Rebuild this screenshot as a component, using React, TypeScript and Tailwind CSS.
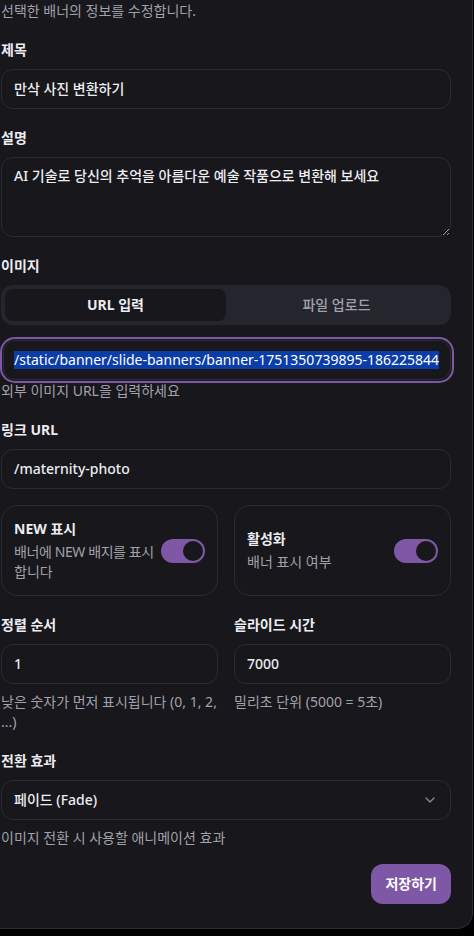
import React from "react";
import { ChevronDown } from "lucide-react";

const font = { fontFamily: '"Noto Sans", "Noto Sans CJK KR", sans-serif' };

function Label({ children, className = "" }: { children: React.ReactNode; className?: string }) {
  return <div className={`text-sm leading-5 font-bold text-[#ececf1] ${className}`}>{children}</div>;
}

function Input({ value }: { value: string }) {
  return (
    <div className="mt-[9px] h-10 w-full rounded-xl border border-[#2b2b34] bg-[#17171c] px-3 flex items-center text-sm font-medium text-[#ececf1]">
      {value}
    </div>
  );
}

function Toggle() {
  return (
    <div className="flex h-6 w-11 shrink-0 items-center justify-end rounded-full bg-[#7e58a7] p-[2px]">
      <div className="h-5 w-5 rounded-full bg-[#17171c]" />
    </div>
  );
}

export default function App() {
  return (
    <div className="h-[936px] w-[474px] overflow-hidden bg-black" style={font}>
      <div className="ml-[-23px] w-[496px] border-x border-b border-[#2b2b34] rounded-br-2xl bg-[#17171c] pl-[23px] pr-[21px] pt-px pb-6">
        <div className="text-sm leading-5 text-[#a1a1aa]">선택한 배너의 정보를 수정합니다.</div>

        <Label className="mt-[19px]">제목</Label>
        <Input value="만삭 사진 변환하기" />

        <Label className="mt-[19px]">설명</Label>
        <textarea
          readOnly
          value="AI 기술로 당신의 추억을 아름다운 예술 작품으로 변환해 보세요"
          className="mt-[9px] block h-20 w-full rounded-xl border border-[#2b2b34] bg-[#17171c] px-3 py-2 text-sm leading-5 font-medium text-[#ececf1] outline-none"
          style={font}
        />

        <Label className="mt-[19px]">이미지</Label>
        <div className="mt-[9px] grid h-10 grid-cols-2 rounded-xl bg-[#25252d] p-1">
          <div className="flex items-center justify-center rounded-lg bg-[#17171c] text-sm font-bold text-[#ececf1]">URL 입력</div>
          <div className="flex items-center justify-center text-sm font-medium text-[#a1a1aa]">파일 업로드</div>
        </div>
        <div className="mt-[15px] ml-[2px] h-10 w-[448px] rounded-xl border border-[#2b2b34] bg-[#17171c] pl-[10px] flex items-center overflow-hidden ring-2 ring-[#7e58a7] ring-offset-1 ring-offset-[#17171c]">
          <span className="whitespace-nowrap bg-[#0b3da8] text-sm leading-[18px] text-white">/static/banner/slide-banners/banner-1751350739895-186225844</span>
        </div>
        <div className="mt-px text-sm leading-5 text-[#a1a1aa]">외부 이미지 URL을 입력하세요</div>

        <Label className="mt-[19px]">링크 URL</Label>
        <Input value="/maternity-photo" />

        <div className="mt-4 grid grid-cols-2 gap-4">
          <div className="flex items-center justify-between rounded-2xl border border-[#2b2b34] px-3 py-[13px]">
            <div className="min-w-0">
              <div className="text-sm leading-5 font-bold text-[#ececf1]">NEW 표시</div>
              <div className="mt-[3px] text-sm leading-5 text-[#a1a1aa]">
                <div className="whitespace-nowrap tracking-[-0.4px]">배너에 NEW 배지를 표시</div>
                <div className="whitespace-nowrap">합니다</div>
              </div>
            </div>
            <Toggle />
          </div>
          <div className="flex items-center justify-between gap-0.5 rounded-2xl border border-[#2b2b34] px-3 py-[13px]">
            <div>
              <div className="text-sm leading-5 font-bold text-[#ececf1]">활성화</div>
              <div className="mt-[3px] text-sm leading-5 text-[#a1a1aa]">배너 표시 여부</div>
            </div>
            <Toggle />
          </div>
        </div>

        <div className="mt-[19px] grid grid-cols-2 gap-4">
          <div>
            <Label>정렬 순서</Label>
            <Input value="1" />
            <div className="mt-2 text-sm leading-5 text-[#a1a1aa]">낮은 숫자가 먼저 표시됩니다 (0, 1, 2, ...)</div>
          </div>
          <div>
            <Label>슬라이드 시간</Label>
            <Input value="7000" />
            <div className="mt-2 text-sm leading-5 text-[#a1a1aa]">밀리초 단위 (5000 = 5초)</div>
          </div>
        </div>

        <Label className="mt-[19px]">전환 효과</Label>
        <div className="mt-[9px] flex h-10 w-full items-center justify-between rounded-xl border border-[#2b2b34] px-3 text-sm font-medium text-[#ececf1]">
          <span>페이드 (Fade)</span>
          <ChevronDown className="h-4 w-4 text-[#8a8a92]" />
        </div>
        <div className="mt-2 text-sm leading-5 text-[#a1a1aa]">이미지 전환 시 사용할 애니메이션 효과</div>

        <div className="mt-4 flex justify-end">
          <div className="flex h-10 items-center rounded-xl bg-[#7e58a7] px-[14px] text-sm font-bold text-white">저장하기</div>
        </div>
      </div>
    </div>
  );
}
